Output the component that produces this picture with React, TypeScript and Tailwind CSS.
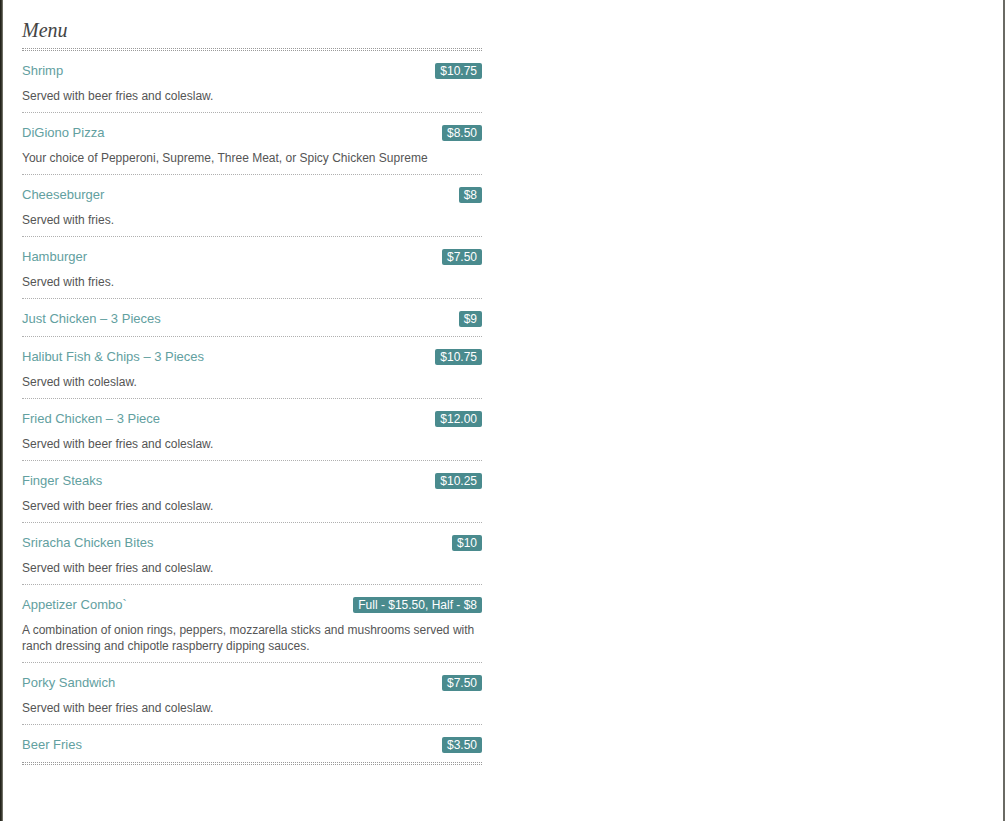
import React from "react";

type Item = { name: string; price: string; desc?: string };

const items: Item[] = [
  { name: "Shrimp", price: "$10.75", desc: "Served with beer fries and coleslaw." },
  { name: "DiGiono Pizza", price: "$8.50", desc: "Your choice of Pepperoni, Supreme, Three Meat, or Spicy Chicken Supreme" },
  { name: "Cheeseburger", price: "$8", desc: "Served with fries." },
  { name: "Hamburger", price: "$7.50", desc: "Served with fries." },
  { name: "Just Chicken – 3 Pieces", price: "$9" },
  { name: "Halibut Fish & Chips – 3 Pieces", price: "$10.75", desc: "Served with coleslaw." },
  { name: "Fried Chicken – 3 Piece", price: "$12.00", desc: "Served with beer fries and coleslaw." },
  { name: "Finger Steaks", price: "$10.25", desc: "Served with beer fries and coleslaw." },
  { name: "Sriracha Chicken Bites", price: "$10", desc: "Served with beer fries and coleslaw." },
  {
    name: "Appetizer Combo`",
    price: "Full - $15.50, Half - $8",
    desc: "A combination of onion rings, peppers, mozzarella sticks and mushrooms served with ranch dressing and chipotle raspberry dipping sauces.",
  },
  { name: "Porky Sandwich", price: "$7.50", desc: "Served with beer fries and coleslaw." },
  { name: "Beer Fries", price: "$3.50" },
];

export default function App() {
  return (
    <div
      className="w-[1005px] h-[821px] bg-white flex"
      style={{ fontFamily: '"Liberation Sans", Arial, sans-serif' }}
    >
      <div className="w-[3px] h-full bg-gradient-to-r from-[#1a1a14] via-[#3a3a30] to-[#8a8a80]" />
      <div className="flex-1 pl-[19px] pt-[17px]">
        <div className="w-[460px]">
          <h2
            className="text-[20px] leading-[26px] italic text-[#444] pb-[5px]"
            style={{ fontFamily: '"Liberation Serif", "Times New Roman", serif' }}
          >
            Menu
          </h2>
          <div className="h-[3px] border-y border-dotted border-[#9a9a9a]" />
          {items.map((it, i) => (
            <div
              key={i}
              className={`pt-[11px] pb-[8px] ${i > 0 ? "border-t border-dotted border-[#b0b0b0]" : ""}`}
            >
              <div className="flex items-center justify-between h-[18px]">
                <span className="text-[13px] text-[#62a0a0] leading-[18px]">{it.name}</span>
                <span className="bg-[#4a8b8e] text-white text-[12px] leading-[16px] px-[5px] rounded-[2px]">
                  {it.price}
                </span>
              </div>
              {it.desc && (
                <p className="mt-[8px] text-[12px] leading-[16px] text-[#555]">{it.desc}</p>
              )}
            </div>
          ))}
          <div className="h-[3px] border-y border-dotted border-[#9a9a9a]" />
        </div>
      </div>
      <div className="w-[2px] h-full bg-[#6a6a64]" />
    </div>
  );
}
